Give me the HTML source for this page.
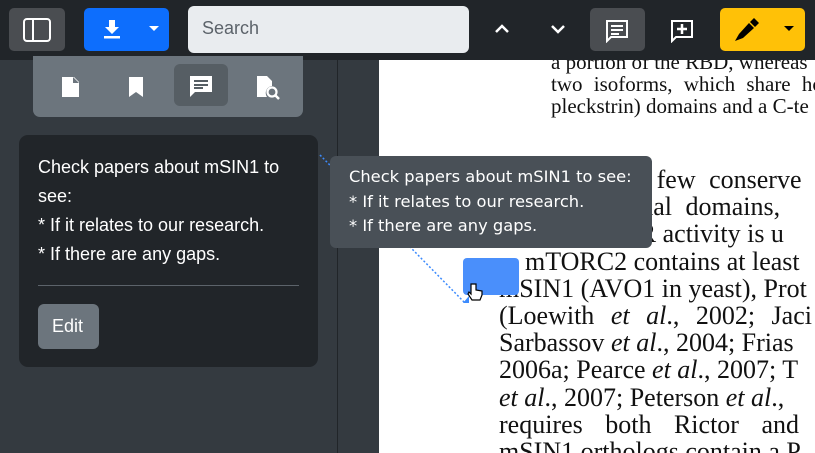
<!DOCTYPE html><html><head><style>
body{margin:0;width:815px;height:453px;overflow:hidden;position:relative;background:#343a40;font-family:"Liberation Sans",sans-serif}
.tb{position:absolute;left:0;top:0;width:815px;height:60px;background:#212529}
.b{position:absolute;border-radius:5px}
.pdf{position:absolute;left:379px;top:60px;width:436px;height:393px;background:#fff;overflow:hidden}
.pdf div{position:absolute;font-family:"Liberation Serif",serif;color:#111;white-space:nowrap}
.s{font-size:21px;left:172px;line-height:22px}
.m{font-size:26px;left:120px;line-height:27.2px}
</style></head><body>
<div class="tb"></div>
<div class="b" style="left:9px;top:8px;width:56px;height:43px;background:#4a4d51"></div>
<svg style="position:absolute;left:23px;top:18px" width="28" height="24"><rect x="1" y="1" width="26" height="22" rx="3" fill="none" stroke="#fff" stroke-width="2"/><line x1="10" y1="1" x2="10" y2="23" stroke="#fff" stroke-width="2"/></svg>
<div class="b" style="left:84px;top:8px;width:85px;height:43px;background:#0d6efd"></div>
<svg style="position:absolute;left:102px;top:19px" width="20" height="22"><path d="M7 1h6v7h4l-7 7-7-7h4z" fill="#fff"/><rect x="2" y="17" width="16" height="2.5" fill="#fff"/></svg>
<svg style="position:absolute;left:148px;top:25px" width="12" height="7"><path d="M1 1h10l-5 5z" fill="#fff"/></svg>
<div class="b" style="left:188px;top:6px;width:281px;height:47px;background:#e9ecef;border-radius:6px"></div>
<div style="position:absolute;left:202px;top:18px;font-size:18px;color:#5c636a">Search</div>
<svg style="position:absolute;left:493px;top:22px" width="18" height="14"><path d="M3 10l6-6 6 6" fill="none" stroke="#fff" stroke-width="2.5"/></svg>
<svg style="position:absolute;left:549px;top:22px" width="18" height="14"><path d="M3 4l6 6 6-6" fill="none" stroke="#fff" stroke-width="2.5"/></svg>
<div class="b" style="left:590px;top:8px;width:55px;height:43px;background:#4a4d51"></div>
<svg style="position:absolute;left:605px;top:19px" width="26" height="24"><path d="M2 2h20v16H6l-4 4z" fill="none" stroke="#fff" stroke-width="2"/><path d="M6 7h12M6 11h12M6 15h8" stroke="#fff" stroke-width="2"/></svg>
<svg style="position:absolute;left:670px;top:19px" width="26" height="24"><path d="M2 2h20v16H6l-4 4z" fill="none" stroke="#fff" stroke-width="2"/><path d="M12 5v10M7 10h10" stroke="#fff" stroke-width="2.5"/></svg>
<div class="b" style="left:720px;top:8px;width:85px;height:43px;background:#ffc107"></div>
<svg style="position:absolute;left:733px;top:16px" width="30" height="28"><path d="M2 25l4-7 10-11 5 5-11 10z" fill="#000"/><path d="M17 6l4-4 5 5-4 4z" fill="#000"/></svg>
<svg style="position:absolute;left:783px;top:25px" width="12" height="7"><path d="M1 1h10l-5 5z" fill="#000"/></svg>
<div style="position:absolute;left:337px;top:60px;width:1px;height:393px;background:#212529"></div>
<div class="b" style="left:33px;top:56px;width:270px;height:61px;background:#6c757d;border-radius:0 0 7px 7px"></div>
<div class="b" style="left:174px;top:64px;width:54px;height:42px;background:#565e64;border-radius:6px"></div>
<svg style="position:absolute;left:61px;top:76px" width="20" height="22"><path d="M1 1h12l5 5v15H1z" fill="#fff"/><path d="M12 1v6h6" fill="#6c757d"/></svg>
<svg style="position:absolute;left:128px;top:76px" width="16" height="22"><path d="M1 1h14v20l-7-5-7 5z" fill="#fff"/></svg>
<svg style="position:absolute;left:189px;top:75px" width="24" height="22"><path d="M1 1h22v16H6l-5 5z" fill="#fff"/><path d="M5 6h14M5 10h14M5 13h9" stroke="#565e64" stroke-width="2"/></svg>
<svg style="position:absolute;left:256px;top:75px" width="26" height="26"><path d="M1 1h10l5 5v5a7 7 0 0 0-5 11H1z" fill="#fff"/><circle cx="16" cy="17" r="4.5" fill="none" stroke="#fff" stroke-width="2.2"/><path d="M19 20l4 4" stroke="#fff" stroke-width="2.5"/></svg>
<div class="b" style="left:19px;top:135px;width:299px;height:232px;background:#212529;border-radius:9px"></div>
<div style="position:absolute;left:38px;top:153px;width:255px;font-size:18px;line-height:29px;color:#fff">Check papers about mSIN1 to see:<br>* If it relates to our research.<br>* If there are any gaps.</div>
<div style="position:absolute;left:38px;top:285px;width:261px;height:1px;background:#5c636a"></div>
<div class="b" style="left:38px;top:304px;width:61px;height:45px;background:#6c757d;border-radius:6px"></div>
<div style="position:absolute;left:52px;top:316px;font-size:18px;color:#fff">Edit</div>
<div class="pdf">
<div class="s" style="top:-9px">a portion of the RBD, whereas</div>
<div class="s" style="top:13px;word-spacing:6px">two isoforms, which share ho</div>
<div class="s" style="top:35px">pleckstrin) domains and a C-te</div>
<div class="m" style="top:106px;left:241px;word-spacing:7px">ns few conserve</div>
<div class="m" style="top:133px;left:241px;word-spacing:7px">ional domains,</div>
<div class="m" style="top:160px;left:241px">OR activity is u</div>
<div class="m" style="top:188px;left:146px">mTORC2 contains at least</div>
<div class="m" style="top:215px">mSIN1 (AVO1 in yeast), Prot</div>
<div class="m" style="top:242px;word-spacing:10px">(Loewith <i>et al</i>., 2002; Jaci</div>
<div class="m" style="top:269px">Sarbassov <i>et al</i>., 2004; Frias</div>
<div class="m" style="top:296px">2006a; Pearce <i>et al</i>., 2007; T</div>
<div class="m" style="top:324px"><i>et al</i>., 2007; Peterson <i>et al</i>.,</div>
<div class="m" style="top:351px;word-spacing:16px">requires both Rictor and</div>
<div class="m" style="top:378px">mSIN1 orthologs contain a P</div>
</div>
<svg style="position:absolute;left:300px;top:150px" width="200" height="160"><path d="M20 5L165 153" stroke="#3d8bfd" stroke-width="1.5" stroke-dasharray="2 2"/><path d="M163 153l6-7v7z" fill="#3d8bfd"/></svg>
<div class="b" style="left:463px;top:258px;width:56px;height:37px;background:#4a8ffb;border-radius:4px"></div>
<svg style="position:absolute;left:466px;top:282px" width="18" height="20"><path d="M5 2v10l-2-2-1 2 4 6h8l2-5v-4l-6-1V2z" fill="#fff" stroke="#000" stroke-width="1.2"/></svg>
<div class="b" style="left:330px;top:156px;width:322px;height:92px;background:#495057;border-radius:6px"></div>
<div style="position:absolute;left:349px;top:165px;font-family:'DejaVu Sans',sans-serif;font-size:16.3px;line-height:24.5px;color:#fff">Check papers about mSIN1 to see:<br>* If it relates to our research.<br>* If there are any gaps.</div>
</body></html>
